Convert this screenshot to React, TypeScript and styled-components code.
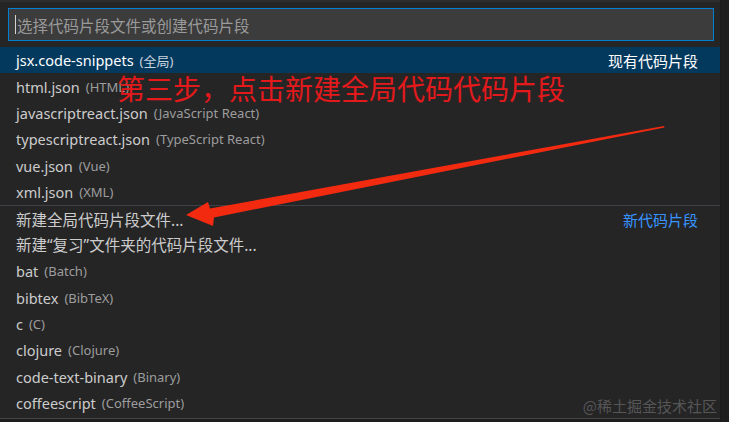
import React from "react";
import styled, { createGlobalStyle } from "styled-components";

const Global = createGlobalStyle`
  html, body { margin: 0; padding: 0; background: #1e1e1e; }
  body { width: 729px; height: 422px; overflow: hidden; font-family: "Noto Sans", "Noto Sans CJK SC", sans-serif; }
  #root { width: 729px; height: 422px; }
`;

const Screen = styled.div`
  position: relative;
  display: flex;
  width: 729px;
  height: 422px;
  background: #1e1e1e;
  overflow: hidden;
`;

const Panel = styled.div`
  width: 720px;
  height: 419px;
  display: flex;
  flex-direction: column;
  background: #252526;
  border-top: 2px solid #2d2d2d;
  border-bottom: 1px solid #454545;
  box-sizing: border-box;
`;

const SideStrip = styled.div`
  flex: 1;
  background: #1e1e1e;
  border-left: 1px solid #1a1a1a;
`;

const InputWrap = styled.div`
  padding: 6px 6px 6px 8px;
`;

const Input = styled.div`
  height: 33px;
  box-sizing: border-box;
  background: #3c3c3c;
  border: 1px solid #007fd4;
  display: flex;
  align-items: center;
  padding-left: 6px;
  font-family: "Noto Sans CJK SC", "Noto Sans", sans-serif;
  font-size: 15.5px;
  color: #9a9a9a;
`;

const Caret = styled.span`
  display: inline-block;
  width: 1px;
  height: 19px;
  background: #d4d4d4;
  margin-right: 1px;
`;

const List = styled.div`
  display: flex;
  flex-direction: column;
`;

const Row = styled.div<{ $selected?: boolean; $separator?: boolean }>`
  height: 26.4px;
  box-sizing: border-box;
  display: flex;
  align-items: center;
  padding: 0 22px 0 16px;
  background: ${(p) => (p.$selected ? "#04395e" : "transparent")};
  border-top: ${(p) => (p.$separator ? "1px solid #3f3f46" : "none")};
  color: ${(p) => (p.$selected ? "#ffffff" : "#cccccc")};
`;

const Label = styled.span<{ $cjk?: boolean }>`
  font-size: ${(p) => (p.$cjk ? "15.5px" : "14.5px")};
  white-space: nowrap;
`;

const Desc = styled.span<{ $selected?: boolean }>`
  font-size: 13px;
  margin-left: 6px;
  color: ${(p) => (p.$selected ? "#c8d3de" : "#9d9d9d")};
  white-space: nowrap;
`;

const Tag = styled.span<{ $tone: "white" | "blue" }>`
  margin-left: auto;
  font-family: "Noto Sans CJK SC", sans-serif;
  font-size: 15px;
  color: ${(p) => (p.$tone === "white" ? "#ffffff" : "#3794ff")};
`;

const Annotation = styled.div`
  position: absolute;
  left: 117px;
  top: 71px;
  font-family: "Noto Sans CJK SC", sans-serif;
  font-size: 28px;
  line-height: 34px;
  color: #e3191b;
  white-space: nowrap;
`;

const ArrowSvg = styled.svg`
  position: absolute;
  left: 0;
  top: 0;
  pointer-events: none;
`;

const Watermark = styled.div`
  position: absolute;
  right: 12px;
  bottom: 6px;
  font-family: "Noto Sans CJK SC", sans-serif;
  font-size: 15px;
  color: rgba(150, 150, 150, 0.45);
  white-space: nowrap;
`;

type Item = { label: string; desc?: string; tag?: { text: string; tone: "white" | "blue" }; selected?: boolean; separator?: boolean; cjk?: boolean };

const items: Item[] = [
  { label: "jsx.code-snippets", desc: "(全局)", tag: { text: "现有代码片段", tone: "white" }, selected: true },
  { label: "html.json", desc: "(HTML)" },
  { label: "javascriptreact.json", desc: "(JavaScript React)" },
  { label: "typescriptreact.json", desc: "(TypeScript React)" },
  { label: "vue.json", desc: "(Vue)" },
  { label: "xml.json", desc: "(XML)" },
  { label: "新建全局代码片段文件...", tag: { text: "新代码片段", tone: "blue" }, separator: true, cjk: true },
  { label: "新建“复习”文件夹的代码片段文件...", cjk: true },
  { label: "bat", desc: "(Batch)" },
  { label: "bibtex", desc: "(BibTeX)" },
  { label: "c", desc: "(C)" },
  { label: "clojure", desc: "(Clojure)" },
  { label: "code-text-binary", desc: "(Binary)" },
  { label: "coffeescript", desc: "(CoffeeScript)" },
];

export default function App() {
  return (
    <Screen>
      <Global />
      <Panel>
        <InputWrap>
          <Input>
            <Caret />
            选择代码片段文件或创建代码片段
          </Input>
        </InputWrap>
        <List>
          {items.map((it) => (
            <Row key={it.label} $selected={it.selected} $separator={it.separator}>
              <Label $cjk={it.cjk}>{it.label}</Label>
              {it.desc && <Desc $selected={it.selected}>{it.desc}</Desc>}
              {it.tag && <Tag $tone={it.tag.tone}>{it.tag.text}</Tag>}
            </Row>
          ))}
        </List>
      </Panel>
      <SideStrip />
      <Annotation>第三步，点击新建全局代码代码片段</Annotation>
      <ArrowSvg width="729" height="422" viewBox="0 0 729 422">
        <polygon
          points="186,215 208,202 210,208.5 664,126 664.5,127.5 214,217.5 213,226"
          fill="#f22a10"
        />
      </ArrowSvg>
      <Watermark>@稀土掘金技术社区</Watermark>
    </Screen>
  );
}
